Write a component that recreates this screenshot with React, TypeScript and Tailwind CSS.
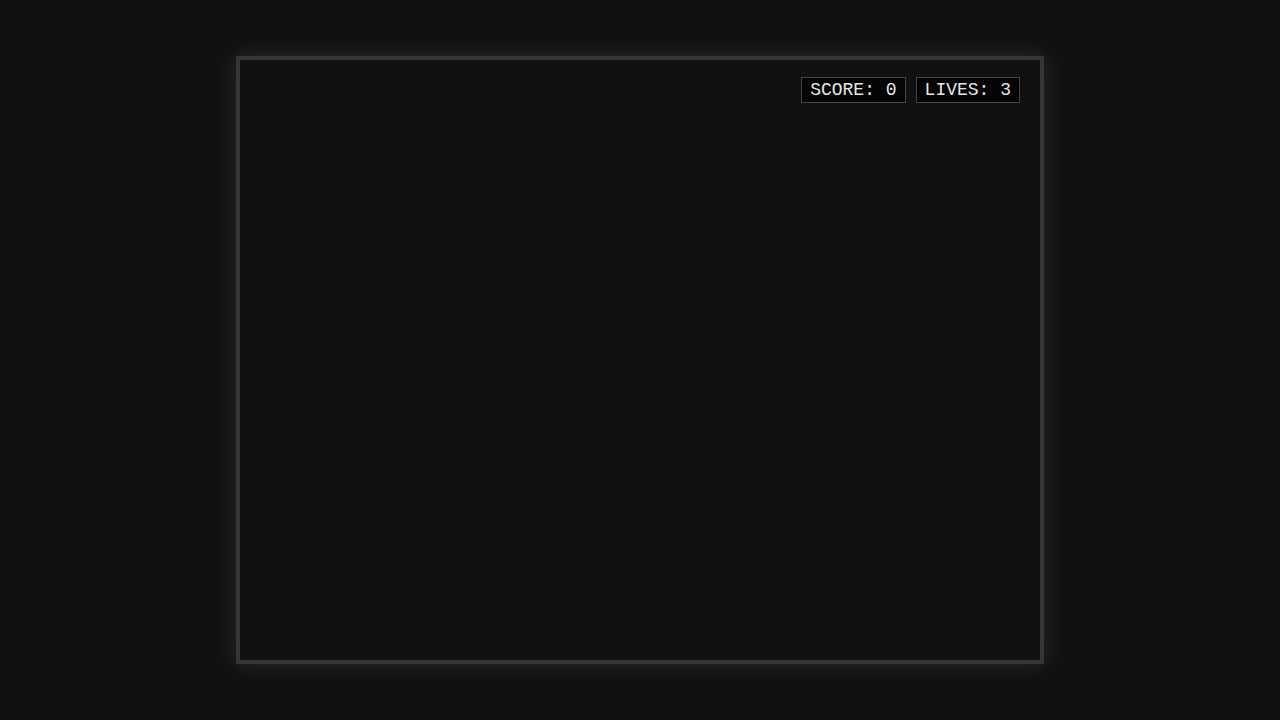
export default function App() {
  return (
    <div className="min-h-screen w-full bg-[#111] flex items-center justify-center" style={{ height: 720 }}>
      {/* Game board */}
      <div className="relative w-[808px] h-[608px] border-4 border-[#363636] bg-[#111] shadow-[0_0_20px_rgba(60,60,60,0.6)]">
        {/* HUD */}
        <div
          className="absolute top-[17px] right-[20px] flex gap-[10px] text-[18px] leading-[20px] text-[#e6e6e6]"
          style={{ fontFamily: '"Courier New", Courier, "Nimbus Mono PS", "Liberation Mono", monospace' }}
        >
          <div className="bg-[#050505] border border-[#444] px-2 py-[2px]">SCORE: 0</div>
          <div className="bg-[#050505] border border-[#444] px-2 py-[2px]">LIVES: 3</div>
        </div>
      </div>
    </div>
  );
}
